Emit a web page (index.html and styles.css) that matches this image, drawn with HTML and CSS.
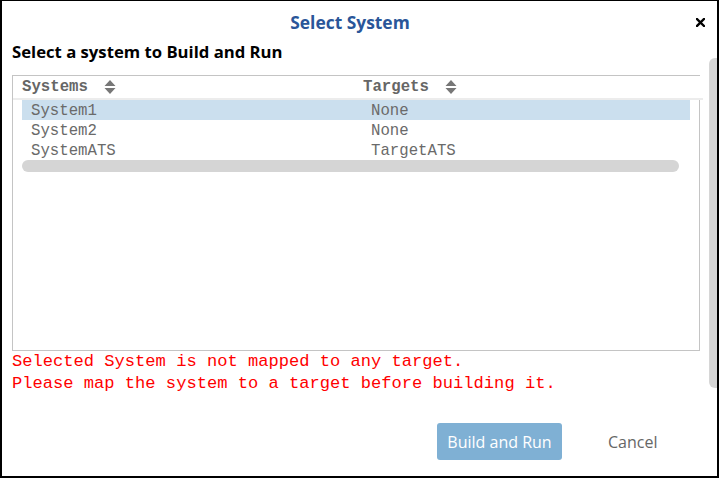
FILE: index.html
```html
<!DOCTYPE html>
<html>
<head>
<meta charset="utf-8">
<link rel="stylesheet" href="styles.css">
</head>
<body>
<div class="dialog">
  <div class="title-bar">
    <div class="title">Select System</div>
    <button class="close" aria-label="Close">
      <svg width="9" height="9" viewBox="0 0 9 9"><path d="M1 1 L8 8 M8 1 L1 8" stroke="#000" stroke-width="2.4" stroke-linecap="square"/></svg>
    </button>
  </div>
  <div class="subtitle">Select a system to Build and Run</div>
  <div class="grid">
    <div class="grid-head">
      <div class="hcell col1">Systems <span class="sort"><svg width="12" height="14" viewBox="0 0 12 14"><path d="M6 0 L11.5 6 L0.5 6 Z M6 14 L11.5 8 L0.5 8 Z" fill="#777"/></svg></span></div>
      <div class="hcell col2">Targets <span class="sort"><svg width="12" height="14" viewBox="0 0 12 14"><path d="M6 0 L11.5 6 L0.5 6 Z M6 14 L11.5 8 L0.5 8 Z" fill="#777"/></svg></span></div>
    </div>
    <div class="grid-body">
      <div class="row selected"><div class="cell col1">System1</div><div class="cell col2">None</div></div>
      <div class="row"><div class="cell col1">System2</div><div class="cell col2">None</div></div>
      <div class="row"><div class="cell col1">SystemATS</div><div class="cell col2">TargetATS</div></div>
      <div class="hscroll"></div>
    </div>
  </div>
  <div class="errors">
    <div>Selected System is not mapped to any target.</div>
    <div>Please map the system to a target before building it.</div>
  </div>
  <div class="footer">
    <button class="btn primary">Build and Run</button>
    <button class="btn link">Cancel</button>
  </div>
  <div class="vscroll"></div>
</div>
</body>
</html>
```

FILE: styles.css
```css
html, body {
  margin: 0;
  padding: 0;
  background: #fff;
}
.dialog {
  position: relative;
  box-sizing: border-box;
  width: 719px;
  height: 478px;
  border: 2px solid #000;
  border-top-width: 1px;
  padding-left: 10px;
  font-family: "Open Sans", sans-serif;
  overflow: hidden;
}
.title-bar {
  display: flex;
  align-items: center;
  height: 24px;
  padding-top: 9px;
  margin-bottom: 8px;
}
.title {
  flex: 1;
  text-align: center;
  font-size: 17.4px;
  font-weight: 700;
  color: #2a5699;
  line-height: 24px;
  padding-right: 8px;
}
.close {
  border: 0;
  background: none;
  padding: 0;
  width: 9px;
  height: 9px;
  margin-right: 12px;
  display: flex;
}
.subtitle {
  font-size: 16.7px;
  font-weight: 700;
  color: #000;
  line-height: 20px;
  height: 20px;
}
.grid {
  margin-top: 13px;
  width: 687px;
  height: 274px;
  border-top: 1px solid #c4c4c4;
  border-left: 1px solid #c4c4c4;
  border-bottom: 1px solid #c4c4c4;
  display: flex;
  flex-direction: column;
  font-family: "Liberation Mono", monospace;
}
.grid-head {
  display: flex;
  height: 22px;
  padding-left: 9px;
  border-bottom: 2px solid #ececec;
  margin-right: -3px;
}
.hcell {
  font-size: 15.7px;
  font-weight: 700;
  color: #666;
  line-height: 22px;
  display: flex;
  align-items: center;
}
.sort {
  display: inline-flex;
  margin-left: 16px;
}
.grid-head .col1 { width: 341px; }
.grid-body {
  flex: 1;
  border-right: 1px solid #c4c4c4;
  padding-left: 9px;
}
.row {
  display: flex;
  width: 668px;
  height: 20px;
  line-height: 23px;
  font-size: 15.7px;
  color: #6a6a6a;
}
.row.selected { background: #cbdfee; }
.row .col1 { width: 340px; padding-left: 9px; }
.row .col2 { padding-left: 0; }
.hscroll {
  width: 657px;
  height: 12px;
  border-radius: 6px;
  background: #d5d5d5;
}
.errors {
  font-family: "Liberation Mono", monospace;
  font-size: 17.1px;
  line-height: 22px;
  color: #ff0000;
}
.footer {
  display: flex;
  align-items: center;
  margin-top: 28px;
  padding-left: 425px;
}
.btn {
  font-family: "Open Sans", sans-serif;
  font-size: 16px;
  border: 0;
  cursor: pointer;
}
.btn.primary {
  width: 125px;
  height: 37px;
  background: #7fb0d4;
  color: #fff;
  border-radius: 3px;
  padding: 0;
}
.btn.link {
  background: none;
  color: #666;
  margin-left: 46px;
  padding: 0;
}
.vscroll {
  position: absolute;
  right: 0;
  top: 57px;
  width: 8px;
  height: 330px;
  background: #d6d6d6;
  border-radius: 6px 0 0 6px;
}
```
